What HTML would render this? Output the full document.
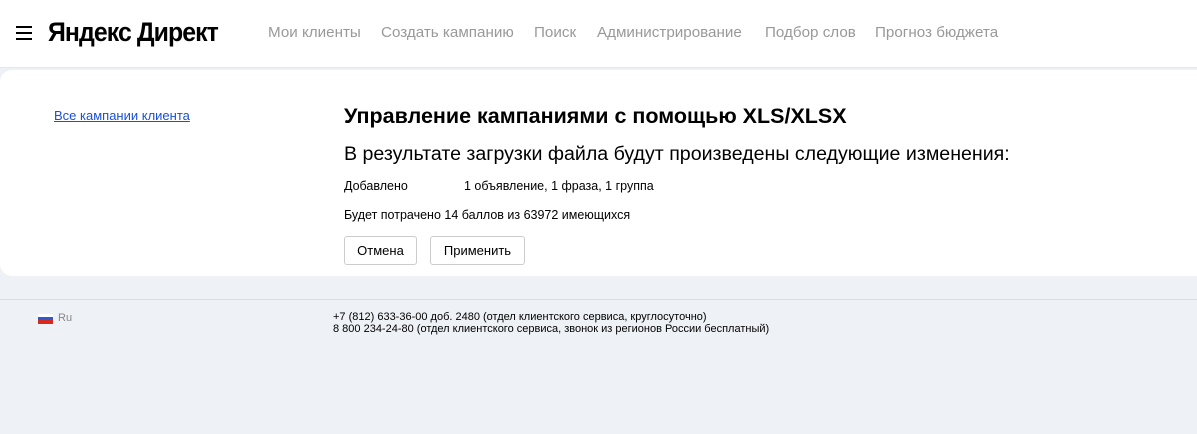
<!DOCTYPE html>
<html><head><meta charset="utf-8"><style>
*{margin:0;padding:0;box-sizing:border-box}
body{width:1197px;height:434px;background:#eef1f5;font-family:"Liberation Sans",sans-serif;color:#000;overflow:hidden;position:relative}
.hdr{position:absolute;left:0;top:0;width:1197px;height:68px;background:#fff;border-bottom:1px solid #e6e6e6}
.burger{position:absolute;left:16px;top:26px;width:16px}
.burger i{display:block;height:2px;background:#000;margin-bottom:4px}
.logo{position:absolute;left:48px;top:17px;font-size:27px;font-weight:bold;letter-spacing:-1px;transform:scaleX(0.92);transform-origin:left}
.nav{position:absolute;top:24px;font-size:15.2px;color:#999}
.card{position:absolute;left:0;top:70px;width:1197px;height:206px;background:#fff;border-radius:12px 0 0 12px}
a.l{position:absolute;left:54px;top:108px;font-size:13px;color:#1a4fd6;text-decoration:underline}
h1{position:absolute;left:344px;top:104px;font-size:21.5px;font-weight:bold}
h2{position:absolute;left:344px;top:143px;font-size:19.6px;font-weight:normal}
.t{position:absolute;font-size:12.5px}
.btn{position:absolute;top:236px;height:29px;border:1px solid #ccc;border-radius:3px;font-size:13px;line-height:27px;text-align:center;background:#fff}
.fl{position:absolute;left:0;top:299px;width:1197px;border-top:1px solid #dcdcdc}
.ft{position:absolute;left:333px;top:311px;font-size:11px;line-height:12px}
</style></head><body>
<div class="hdr">
<div class="burger"><i></i><i></i><i></i></div>
<div class="logo">Яндекс Директ</div>
<span class="nav" style="left:268px">Мои клиенты</span>
<span class="nav" style="left:381px">Создать кампанию</span>
<span class="nav" style="left:534px">Поиск</span>
<span class="nav" style="left:597px">Администрирование</span>
<span class="nav" style="left:765px">Подбор слов</span>
<span class="nav" style="left:875px">Прогноз бюджета</span>
</div>
<div class="card"></div>
<a class="l">Все кампании клиента</a>
<h1>Управление кампаниями с помощью XLS/XLSX</h1>
<h2>В результате загрузки файла будут произведены следующие изменения:</h2>
<div class="t" style="left:344px;top:179px">Добавлено</div>
<div class="t" style="left:464px;top:179px">1 объявление, 1 фраза, 1 группа</div>
<div class="t" style="left:344px;top:208px">Будет потрачено 14 баллов из 63972 имеющихся</div>
<div class="btn" style="left:344px;width:73px">Отмена</div>
<div class="btn" style="left:430px;width:95px">Применить</div>
<div class="fl"></div>
<div style="position:absolute;left:38px;top:314px;width:15px;height:10px">
<div style="height:3px;background:#fff"></div><div style="height:3px;background:#2a5bd7"></div><div style="height:4px;background:#d52b1e"></div></div>
<div style="position:absolute;left:58px;top:312px;font-size:11px;color:#888">Ru</div>
<div class="ft">+7 (812) 633-36-00 доб. 2480 (отдел клиентского сервиса, круглосуточно)<br>8 800 234-24-80 (отдел клиентского сервиса, звонок из регионов России бесплатный)</div>
</body></html>
